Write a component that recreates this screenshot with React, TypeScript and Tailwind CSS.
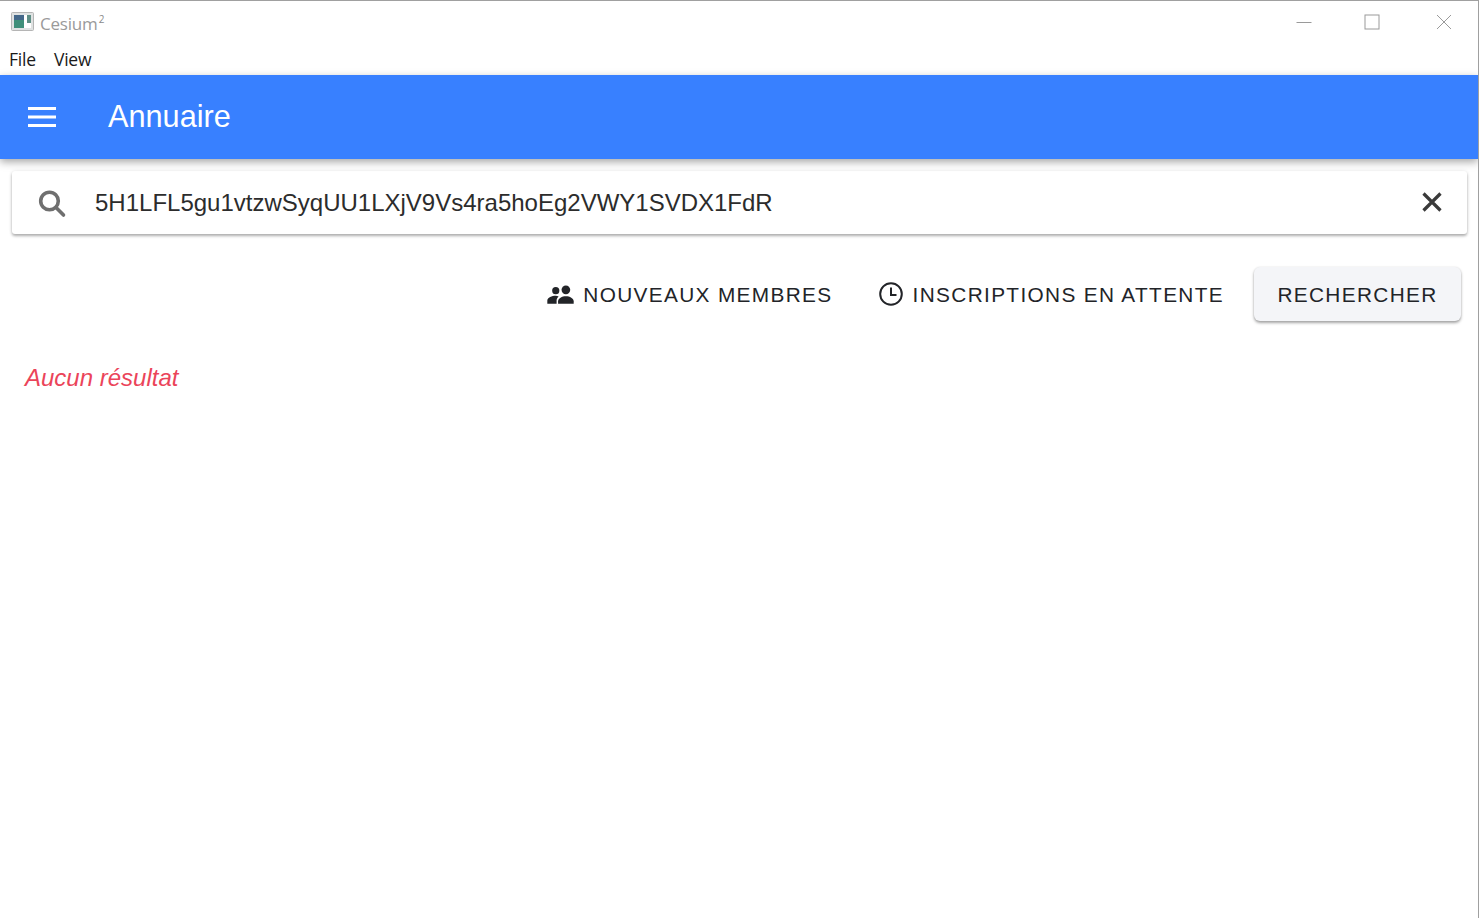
import React from "react";

const arial = { fontFamily: '"Liberation Sans", Arial, sans-serif' };

export default function App() {
  return (
    <div className="h-[918px] w-[1479px] overflow-hidden bg-white border-t border-t-[#a0a0a0] border-r border-r-[#a0a0a0] flex flex-col font-['Liberation_Sans',sans-serif]">
      {/* Title bar */}
      <div className="h-[39px] flex items-center shrink-0 relative">
        <svg className="ml-[11px] mt-[1px]" width="23" height="19" viewBox="0 0 23 19">
          <rect x="0.5" y="0.5" width="22" height="18" rx="1" fill="#dfe2e2" stroke="#b5b5b5" />
          <rect x="3" y="3" width="17" height="13" fill="#fff" />
          <rect x="3" y="3" width="10" height="13" fill="#3f8f7a" />
          <rect x="3" y="3" width="10" height="5" fill="#44688a" />
          <rect x="16" y="3" width="4" height="8" fill="#5f8f86" />
        </svg>
        <span className="ml-[6px] text-[17px] text-[#9a9a9a] font-['Open_Sans',sans-serif] leading-none tracking-[-0.2px] mt-[5px]">
          Cesium<sup className="text-[10px] align-[2px] leading-none ml-[1px] text-[#8a8a8a]">2</sup>
        </span>
        <div className="ml-auto flex items-center text-[#9a9a9a]">
          <svg width="16" height="16" viewBox="0 0 16 16" className="mr-[52px] mt-[2px]"><path d="M0.5 8.5h15" stroke="#9a9a9a" /></svg>
          <svg width="16" height="16" viewBox="0 0 16 16" className="mr-[56px] mt-[2px]"><rect x="1" y="1" width="14" height="14" fill="none" stroke="#9a9a9a" strokeWidth="1" /></svg>
          <svg width="16" height="16" viewBox="0 0 16 16" className="mr-[26px] mt-[2px]"><path d="M1 1l14 14M15 1L1 15" stroke="#9a9a9a" /></svg>
        </div>
      </div>

      {/* Menu bar */}
      <div className="h-[35px] flex items-center shrink-0 pl-[9px] gap-[18px] text-[17.5px] text-[#1a1a1a] font-['Open_Sans',sans-serif] tracking-[-0.2px]">
        <span className="mt-[3px]">File</span>
        <span className="mt-[3px]">View</span>
      </div>

      {/* App header */}
      <header className="h-[84px] shrink-0 bg-[#3880ff] flex items-center text-white shadow-[0_3px_8px_rgba(0,0,0,0.35)] relative z-10">
        <svg className="ml-[24px]" width="36" height="36" viewBox="0 0 36 36">
          <path d="M4 9.5h28M4 18h28M4 26.5h28" stroke="#fff" strokeWidth="3" />
        </svg>
        <h1 className="ml-[48px] text-[30.7px] font-normal leading-none" style={arial}>Annuaire</h1>
      </header>

      {/* Search */}
      <div className="ml-[12px] mr-[11px] mt-[12px] h-[63px] shrink-0 rounded-[3px] bg-white flex items-center shadow-[0_2px_3px_rgba(0,0,0,0.3),0_0_4px_rgba(0,0,0,0.08)]">
        <svg className="ml-[24px] mt-[-1px]" width="32" height="32" viewBox="0 0 32 32">
          <circle cx="13.5" cy="15" r="8.8" fill="none" stroke="#6f6f6f" strokeWidth="3.6" />
          <path d="M20 21.5L27.5 29" fill="none" stroke="#6f6f6f" strokeWidth="3.6" strokeLinecap="round" />
        </svg>
        <span className="ml-[27px] text-[24px] text-[#2c2c2c] leading-none" style={arial}>5H1LFL5gu1vtzwSyqUU1LXjV9Vs4ra5hoEg2VWY1SVDX1FdR</span>
        <svg className="ml-auto mr-[20px] mt-[-1px]" width="30" height="30" viewBox="0 0 30 30">
          <path d="M6.5 6.5l17 17M23.5 6.5l-17 17" stroke="#3a3a3a" strokeWidth="3.2" />
        </svg>
      </div>

      {/* Actions */}
      <div className="mt-[33px] flex justify-end items-center pr-[17px] shrink-0">
        <button className="flex items-center mr-[45px] text-[20.8px] text-[#222428] tracking-[1.35px] leading-none" style={arial}>
          <svg width="27" height="27" viewBox="0 0 512 512" className="mr-[9px]">
            <circle cx="358" cy="168" r="82" fill="#222428" />
            <circle cx="166" cy="184" r="68" fill="#222428" />
            <path d="M358 288c-74 0-148 40-148 94v50h296v-50c0-54-74-94-148-94z" fill="#222428" />
            <path d="M166 282c-70 0-160 36-160 88v62h176v-56c0-34 12-60 38-82-18-8-36-12-54-12z" fill="#222428" />
          </svg>
          <span className="mt-[3px]">NOUVEAUX MEMBRES</span>
        </button>
        <button className="flex items-center mr-[30px] text-[20.8px] text-[#222428] tracking-[1.35px] leading-none" style={arial}>
          <svg width="26" height="26" viewBox="0 0 26 26" className="mr-[9px]">
            <circle cx="13" cy="13" r="10.8" fill="none" stroke="#222428" strokeWidth="2" />
            <path d="M13 6.5V14H18.5" fill="none" stroke="#222428" strokeWidth="2" />
          </svg>
          <span className="mt-[3px]">INSCRIPTIONS EN ATTENTE</span>
        </button>
        <button className="h-[54px] w-[207px] rounded-[6px] bg-[#f4f5f8] text-[20.8px] text-[#222428] tracking-[1.35px] leading-none flex items-center justify-center shadow-[0_2px_3px_rgba(0,0,0,0.35),0_0_2px_rgba(0,0,0,0.1)]" style={arial}>
          <span className="mt-[3px]">RECHERCHER</span>
        </button>
      </div>

      <p className="mt-[45px] ml-[25px] text-[24px] italic text-[#eb445a] leading-none" style={arial}>Aucun résultat</p>
    </div>
  );
}
